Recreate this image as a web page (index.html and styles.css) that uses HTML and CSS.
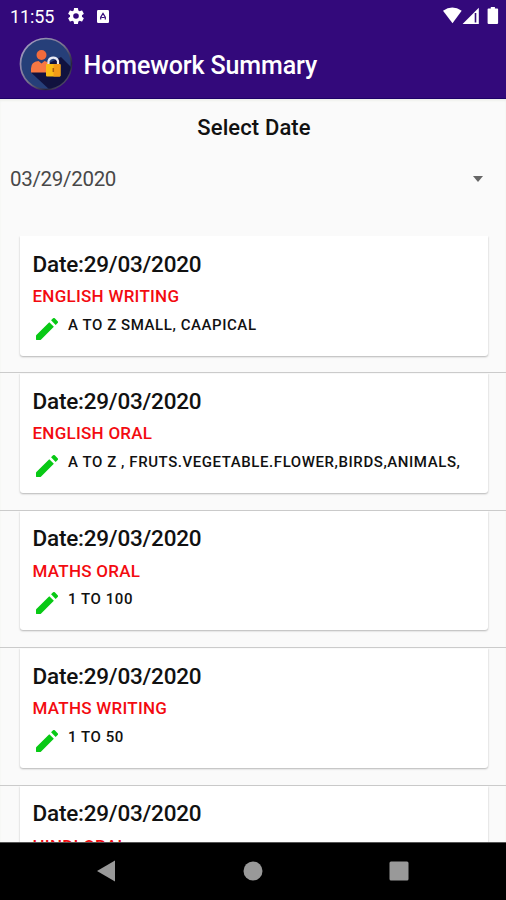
FILE: index.html
```html
<!DOCTYPE html>
<html lang="en">
<head>
<meta charset="utf-8">
<title>Homework Summary</title>
<link rel="stylesheet" href="styles.css">
</head>
<body>
<svg class="defs" width="0" height="0"><symbol id="pencil" viewBox="3 3 18 18"><path d="M3 17.6V20.300q0 .7.700.7h2.700q.3 0 .6-.3L17.610 10.140l-3.750-3.750L3.300 16.950q-.3.3-.3.650zM20.710 7.040a1 1 0 0 0 0-1.410l-2.340-2.340a1 1 0 0 0-1.410 0l-1.630 1.630 3.750 3.750 1.630-1.630z"/></symbol></svg>
<header class="header">
  <div class="status">
    <span class="clock">11:55</span>
    <svg class="gear" viewBox="2 2 20 20"><path fill="#fff" d="M19.43 12.98c.04-.32.07-.64.07-.98s-.03-.66-.07-.98l2.11-1.65c.19-.15.24-.42.12-.64l-2-3.46c-.12-.22-.39-.3-.61-.22l-2.49 1c-.52-.4-1.08-.73-1.69-.98l-.38-2.65A.49.49 0 0 0 14 2h-4c-.25 0-.46.18-.49.42l-.38 2.65c-.61.25-1.17.59-1.69.98l-2.49-1c-.23-.09-.49 0-.61.22l-2 3.46c-.13.22-.07.49.12.64l2.11 1.65c-.04.32-.07.65-.07.98s.03.66.07.98l-2.11 1.65c-.19.15-.24.42-.12.64l2 3.46c.12.22.39.3.61.22l2.49-1c.52.4 1.08.73 1.69.98l.38 2.65c.03.24.24.42.49.42h4c.25 0 .46-.18.49-.42l.38-2.65c.61-.25 1.17-.59 1.69-.98l2.49 1c.23.09.49 0 .61-.22l2-3.46c.12-.22.07-.49-.12-.64l-2.11-1.65zM12 15.5a3.5 3.5 0 1 1 0-7 3.5 3.5 0 0 1 0 7z"/></svg>
    <svg class="input" viewBox="0 0 12 13"><rect width="12" height="13" rx="1.2" fill="#fff"/><path d="M3.7 9.5V7.2L6 3.5l2.300 3.700v2.300M4.500 7.500h3" fill="none" stroke="#33097b" stroke-width="1.200"/></svg>
    <svg class="signals" viewBox="0 0 56 18"><path fill="#fff" d="M0 3.700Q9.300-2.700 18.700 3.700L9.500 16.200z"/><path fill="#fff" d="M35.800.8V17H19.600z"/><path d="M32.500 6v9.500" stroke="#33097b" stroke-width="1.600"/><path fill="#fff" d="M45.500 1.500h2.300V0h4.100v1.500h2.400q.8 0 .8.800v13.600q0 1.100-1.100 1.100h-8.300q-1.100 0-1.100-1.100V2.300q0-.8.900-.8z"/></svg>
  </div>
  <div class="title-row">
    <svg class="logo" viewBox="0 0 54 54">
      <defs>
        <linearGradient id="ring" x1="0" y1="0" x2="1" y2="1"><stop offset="0" stop-color="#aaa4cb"/><stop offset=".5" stop-color="#77728d"/><stop offset=".75" stop-color="#27233d"/><stop offset="1" stop-color="#77728d"/></linearGradient>
        <clipPath id="disc"><circle cx="27" cy="27" r="25"/></clipPath>
      </defs>
      <circle cx="27" cy="27" r="25.500" fill="#263f79" stroke="url(#ring)" stroke-width="1.700"/>
      <path clip-path="url(#disc)" fill="#11123f" d="M12 35.500L42 20l14 14v20H32z"/>
      <circle cx="22.500" cy="18" r="5" fill="#f36b3c"/>
      <path fill="#f87843" d="M12 35.500v-4q0-7 7.500-7.500l3 2.500 3-2.500q5 .5 5 7v4.500z"/>
      <path d="M29.500 28v-4a5 5 0 0 1 9.500 0V28" fill="none" stroke="#e9e9f3" stroke-width="2.200"/>
      <rect x="27" y="27" width="14.500" height="12.500" rx="1" fill="#fabb16"/>
      <path fill="#f39b18" d="M34.500 27h6q1 0 1 1v10.500q0 1-1 1h-6z"/>
      <path d="M34.300 31v4" stroke="#a95d13" stroke-width="1.500"/>
    </svg>
    <h1 class="title"><span>Homework Summary</span></h1>
  </div>
</header>
<main class="content">
  <h2 class="select-label">Select Date</h2>
  <div class="spinner"><span>03/29/2020</span><i class="caret"></i></div>
  <div class="list">
    <section class="row"><article class="card"><h3 class="date">Date:29/03/2020</h3><p class="subject">ENGLISH WRITING</p><div class="task"><svg class="pencil"><use href="#pencil"/></svg><span>A TO Z SMALL, CAAPICAL</span></div></article></section>
    <section class="row"><article class="card"><h3 class="date">Date:29/03/2020</h3><p class="subject">ENGLISH ORAL</p><div class="task"><svg class="pencil"><use href="#pencil"/></svg><span>A TO Z , FRUTS.VEGETABLE.FLOWER,BIRDS,ANIMALS,</span></div></article></section>
    <section class="row"><article class="card"><h3 class="date">Date:29/03/2020</h3><p class="subject">MATHS ORAL</p><div class="task"><svg class="pencil"><use href="#pencil"/></svg><span>1 TO 100</span></div></article></section>
    <section class="row"><article class="card"><h3 class="date">Date:29/03/2020</h3><p class="subject">MATHS WRITING</p><div class="task"><svg class="pencil"><use href="#pencil"/></svg><span>1 TO 50</span></div></article></section>
    <section class="row"><article class="card"><h3 class="date">Date:29/03/2020</h3><p class="subject">HINDI ORAL</p></article></section>
  </div>
</main>
<nav class="navbar">
  <svg viewBox="0 0 18 22"><path fill="#999" d="M0 11L18 .5v21z"/></svg>
  <svg viewBox="0 0 20 20"><circle cx="10" cy="10" r="9.500" fill="#999"/></svg>
  <svg viewBox="0 0 20 20"><rect x=".5" y=".5" width="19" height="19" rx="1.500" fill="#999"/></svg>
</nav>
</body>
</html>
```

FILE: styles.css
```css
* { box-sizing: border-box; margin: 0; padding: 0; }
body {
  width: 506px; height: 900px; overflow: hidden;
  display: flex; flex-direction: column;
  font-family: Roboto, sans-serif; color: #111; background: #fafafa;
}
svg { display: block; flex: none; }
.defs { position: absolute; }
.header { height: 99px; flex: none; background: #33097b; border-bottom: 1px solid #1d0267; color: #fff; }
.status { height: 32px; display: flex; align-items: center; padding-left: 10px; }
.clock { width: 58px; font-size: 18px; letter-spacing: -.1px; }
.gear { width: 16px; height: 16px; }
.input { width: 12px; height: 13px; margin-left: 13px; }
.signals { width: 56px; height: 18px; margin-left: auto; margin-right: 7px; margin-top: -1px; }
.title-row { height: 66px; display: flex; align-items: center; padding-left: 19px; }
.logo { width: 54px; height: 54px; margin-top: -2px; }
.title { margin: 2px 0 0 10.500px; font-size: 25px; font-weight: 500; line-height: 66px; letter-spacing: -.1px; white-space: nowrap; }
.content { flex: 1; min-height: 0; overflow: hidden; box-shadow: inset 0 2px 2px #eff1ed; }
.select-label { height: 57px; line-height: 57px; text-align: center; font-size: 22px; font-weight: 500; letter-spacing: .12px; padding-left: 2px; }
.spinner { height: 80px; display: flex; align-items: flex-start; justify-content: space-between; padding: 0 23.500px 0 10px; font-size: 20.500px; line-height: 47px; color: #484848; letter-spacing: -.3px; }
.caret { margin-top: 20px; border: 5.500px solid transparent; border-top: 6px solid #666; border-bottom: 0; }
.row { height: 137.400px; padding: 0 18px 0 20px; border-bottom: 1.500px solid #cbcbcb; }
.card { height: 119.500px; padding: 12.500px 0 0 12.500px; background: #fff; border-radius: 0 0 3px 3px; box-shadow: 0 1px 2px rgba(0,0,0,.28); clip-path: inset(0 -3px -4px -3px); }
.date { font-size: 22.500px; line-height: 30px; font-weight: 500; letter-spacing: -.22px; white-space: nowrap; }
.subject { margin-top: 5.500px; font-size: 17px; line-height: 24px; font-weight: 500; color: #f30b10; letter-spacing: .26px; white-space: nowrap; }
.task { display: flex; margin-top: 5.500px; font-size: 15px; font-weight: 500; line-height: 23px; white-space: nowrap; }
.task span { margin-left: 10px; letter-spacing: .57px; }
.pencil { width: 22px; height: 22px; margin: 4px 0 0 3.500px; fill: #08c915; }
.navbar { height: 58px; flex: none; display: flex; align-items: center; background: #000; border-top: 1px solid #555; padding: 0 97px 2px 96px; justify-content: space-between; }
.navbar svg { width: 20px; height: 20px; }
.navbar svg:first-child { width: 20px; height: 22px; }
```
